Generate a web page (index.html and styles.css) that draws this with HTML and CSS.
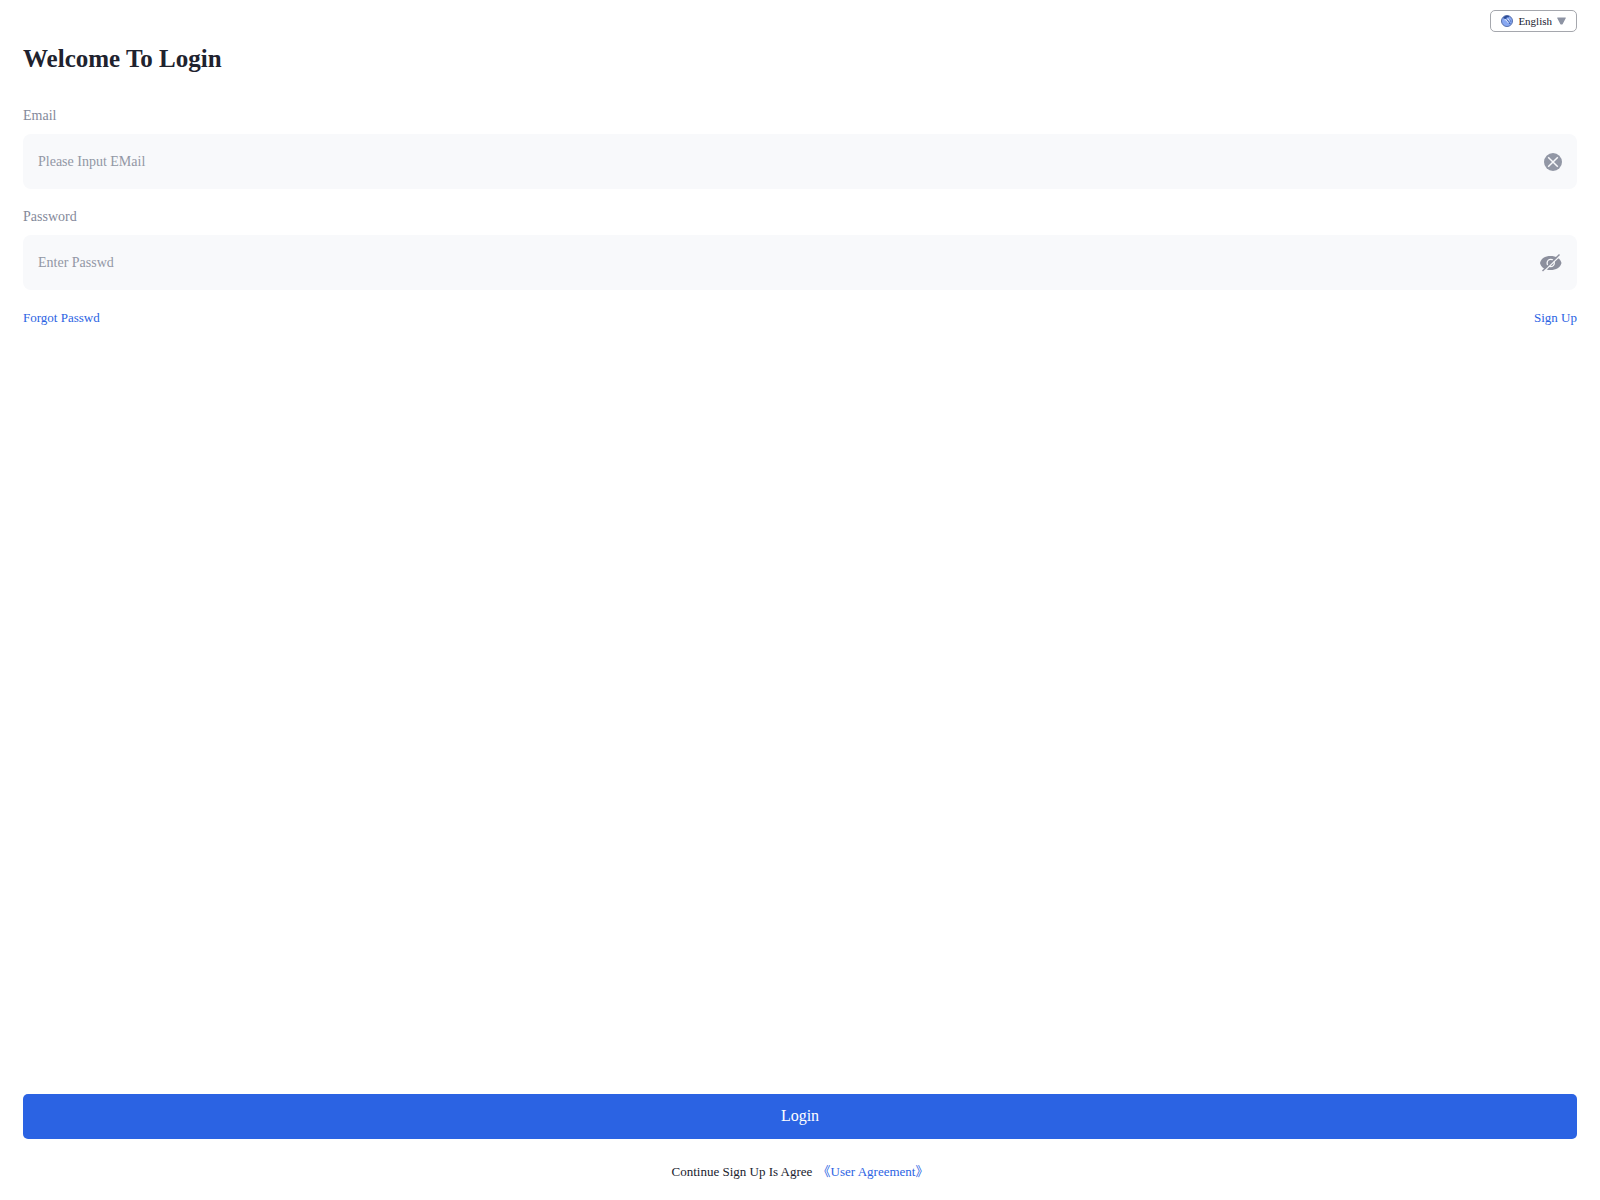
FILE: index.html
```html
<!DOCTYPE html>
<html lang="en">
<head>
<meta charset="utf-8">
<meta name="viewport" content="width=device-width, initial-scale=1">
<title>Login</title>
<link rel="stylesheet" href="styles.css">
</head>
<body>
<form class="page">
  <header class="topbar">
    <button class="language" type="button">
      <svg class="globe" viewBox="0 0 12 12" aria-hidden="true">
        <circle cx="6" cy="6" r="5.500" fill="#88a8f2" stroke="#5871ad"/>
        <path d="M2 3Q3.500 .8 6 .7L8.500 1.300 7.400 2.400 5.500 2.300 6 3.300 4.200 4 3 3.500Z" fill="#2c4c96"/>
        <path d="M5.500 4.800L9.300 9M7.800 4.300L9.800 6.500" stroke="#2c4c96" fill="none"/>
        <path d="M3.500 4.800H5L7.500 8M6.600 3.600L8.800 5.600" stroke="#eef3ff" stroke-width=".9" fill="none"/>
      </svg>
      <span>English</span>
      <svg class="caret" viewBox="0 0 10 8" aria-hidden="true"><path d="M.8 0H9.2Q10.2 0 9.7 .9L6.2 7.500Q5 8.500 3.800 7.500L.3 .9Q-.2 0 .8 0Z" fill="#8d93a3"/></svg>
    </button>
  </header>
  <h1 class="title">Welcome To Login</h1>

  <label class="label" for="email">Email</label>
  <div class="field">
    <input class="input" id="email" type="email" placeholder="Please Input EMail">
    <button class="icon-button" type="button" aria-label="Clear">
      <svg class="clear" viewBox="0 0 18 18" aria-hidden="true"><circle cx="9" cy="9" r="9" fill="#9297a5"/><path d="M4.200 4.200L13.800 13.800M13.800 4.200L4.200 13.800" stroke="#f8f9fb" stroke-width="1.500"/></svg>
    </button>
  </div>

  <label class="label" for="password">Password</label>
  <div class="field">
    <input class="input" id="password" type="password" placeholder="Enter Passwd">
    <button class="icon-button" type="button" aria-label="Show password">
      <svg class="eye" viewBox="0 0 22 18" aria-hidden="true">
        <path d="M0 9C1 4.500 5 2 10.500 2S20.500 4.500 21.500 9C20.500 13.500 16 16 10.500 16S1 13.500 0 9Z" fill="#8c8f9d"/>
        <circle cx="10.700" cy="9" r="3.600" fill="none" stroke="#f8f9fb" stroke-width="1.300"/>
        <path d="M3.600 17.800L20.600 1.300" stroke="#f8f9fb" stroke-width="1.300"/>
        <path d="M2.500 17L19.500 .5" stroke="#8c8f9d" stroke-width="1.400"/>
      </svg>
    </button>
  </div>

  <nav class="links">
    <a class="link" href="#forgot">Forgot Passwd</a>
    <a class="link" href="#signup">Sign Up</a>
  </nav>

  <footer class="footer">
    <button class="submit" type="submit">Login</button>
    <p class="agreement">Continue Sign Up Is Agree <a class="link" href="#agreement">《User Agreement》</a></p>
  </footer>
</form>
</body>
</html>
```
FILE: styles.css
```css
* {
  box-sizing: border-box;
}

body {
  margin: 0;
  background: #fff;
  color: #20222e;
  font-family: "Liberation Serif", "Noto Sans CJK SC", serif;
  font-size: 14px;
}

button,
input {
  font: inherit;
}

.page {
  display: flex;
  flex-direction: column;
  min-height: 100vh;
  padding: 10px 23px 18px;
}

.topbar {
  display: flex;
  justify-content: flex-end;
}

.language {
  display: flex;
  align-items: center;
  gap: 5px;
  height: 22px;
  padding: 0 10px;
  border: 1px solid #a5a7ad;
  border-radius: 5px;
  background: #fff;
  color: #20222e;
  font-size: 11px;
}

.globe {
  width: 12px;
  height: 12px;
}

.caret {
  width: 9px;
  height: 8px;
}

.title {
  margin: 12px 0 32px;
  font-size: 25px;
  line-height: 30px;
}

.label {
  padding-bottom: 8px;
  color: #84899a;
  line-height: 20px;
}

.field {
  display: flex;
  align-items: center;
  height: 55px;
  margin-bottom: 18px;
  padding: 0 15px;
  border-radius: 8px;
  background: #f8f9fb;
}

.input {
  flex: 1;
  min-width: 0;
  height: 100%;
  padding: 0;
  border: 0;
  outline: 0;
  background: transparent;
  color: #20222e;
}

.input::placeholder {
  color: #9297a5;
  opacity: 1;
}

.icon-button {
  display: flex;
  padding: 0;
  border: 0;
  background: none;
}

.clear {
  width: 18px;
  height: 18px;
}

.eye {
  width: 22px;
  height: 18px;
}

.links {
  display: flex;
  justify-content: space-between;
  font-size: 13px;
  line-height: 20px;
}

.link {
  color: #2b63e3;
  text-decoration: none;
}

.footer {
  margin-top: auto;
}

.submit {
  display: block;
  width: 100%;
  height: 45px;
  padding: 0 0 2px;
  border: 0;
  border-radius: 5px;
  background: #2b63e3;
  color: #fff;
  font-size: 16px;
}

.agreement {
  margin: 23px 0 0;
  font-size: 13px;
  line-height: 20px;
  text-align: center;
}

.agreement .link {
  margin-left: 2px;
}
```
